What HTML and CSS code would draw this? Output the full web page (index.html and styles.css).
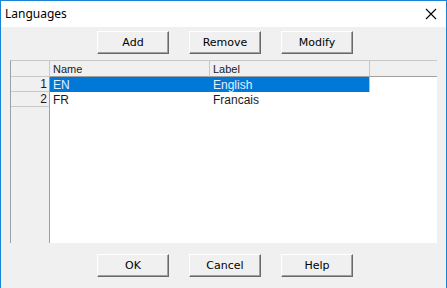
FILE: index.html
```html
<!DOCTYPE html>
<html lang="en">
<head>
  <meta charset="UTF-8" />
  <title>Languages</title>
  <link rel="stylesheet" href="styles.css">
</head>
<body>
  <div class="window">
    <div class="titlebar">
      <span class="title">Languages</span>
      <svg class="close" width="12" height="12" viewBox="0 0 12 12">
        <path d="M1 1 L11 11 M11 1 L1 11" stroke="#000" stroke-width="1.1" fill="none" />
      </svg>
    </div>
    <div class="toolbar">
      <button class="btn">Add</button>
      <button class="btn">Remove</button>
      <button class="btn">Modify</button>
    </div>
    <div class="table">
      <div class="corner"></div>
      <div class="head">Name</div>
      <div class="head">Label</div>
      <div class="head fill"></div>

      <div class="rowhead">1</div>
      <div class="cell selected">EN</div>
      <div class="cell selected last">English</div>
      <div class="cell"></div>

      <div class="rowhead">2</div>
      <div class="cell">FR</div>
      <div class="cell">Francais</div>
      <div class="cell"></div>

      <div class="rowhead rest"></div>
      <div class="cell"></div>
      <div class="cell"></div>
      <div class="cell"></div>
    </div>
    <div class="footer">
      <button class="btn">OK</button>
      <button class="btn">Cancel</button>
      <button class="btn">Help</button>
    </div>
  </div>
</body>
</html>
```

FILE: styles.css
```css
html, body {
  margin: 0;
  padding: 0;
  background: #f0f0f0;
}

.window {
  width: 447px;
  height: 288px;
  box-sizing: border-box;
  border: 1px solid #1883d7;
  border-bottom: none;
  background: #f0f0f0;
  font-family: "Liberation Sans", Arial, sans-serif;
  font-size: 12px;
  color: #1a1a1a;
}

.titlebar {
  height: 26px;
  background: #fff;
  display: flex;
  align-items: center;
  justify-content: space-between;
  padding: 0 8px 0 4px;
}

.title {
  font-family: "Noto Sans", sans-serif;
  font-size: 12px;
  color: #000;
  margin-top: -2px;
}

.close {
  margin-top: -1px;
  margin-right: 1px;
}

.toolbar, .footer {
  display: flex;
  gap: 20px;
  padding-left: 96px;
}

.toolbar {
  padding-top: 4px;
}

.footer {
  padding-top: 11px;
}

.btn {
  width: 72px;
  height: 23px;
  padding: 0 0 1px;
  background: #f0f0f0;
  border: 1px solid;
  border-color: #fff #696969 #696969 #fff;
  box-shadow: inset -1px -1px 0 #a0a0a0;
  font-family: "DejaVu Sans", sans-serif;
  font-size: 11px;
  color: #000;
}

.table {
  margin: 6px 0 0 9px;
  width: 427px;
  height: 183px;
  box-sizing: border-box;
  border-left: 1px solid #a0a0a0;
  border-top: 1px solid #c8c8c8;
  background: #fff;
  display: grid;
  grid-template-columns: 39px 160px 160px 1fr;
  grid-template-rows: 16px 15px 15px 1fr;
}

.corner, .head, .rowhead {
  background: #f0f0f0;
  border-right: 1px solid #c8c8c8;
  border-bottom: 1px solid #c8c8c8;
}

.head {
  padding: 1px 0 0 3px;
  font-size: 11px;
  line-height: 14px;
  border-bottom-color: #a0a0a0;
}

.head.fill {
  border-right: none;
}

.rowhead {
  text-align: right;
  padding-right: 2px;
  padding-top: 1px;
  line-height: 13px;
  border-right-color: #a0a0a0;
}

.rowhead.rest {
  border-bottom: none;
}

.cell {
  padding: 1px 0 0 3px;
  line-height: 14px;
}

.cell.selected {
  background: #0078d7;
  color: #e4efff;
}

.cell.last {
  border-right: 1px solid #99c9ef;
}
```
